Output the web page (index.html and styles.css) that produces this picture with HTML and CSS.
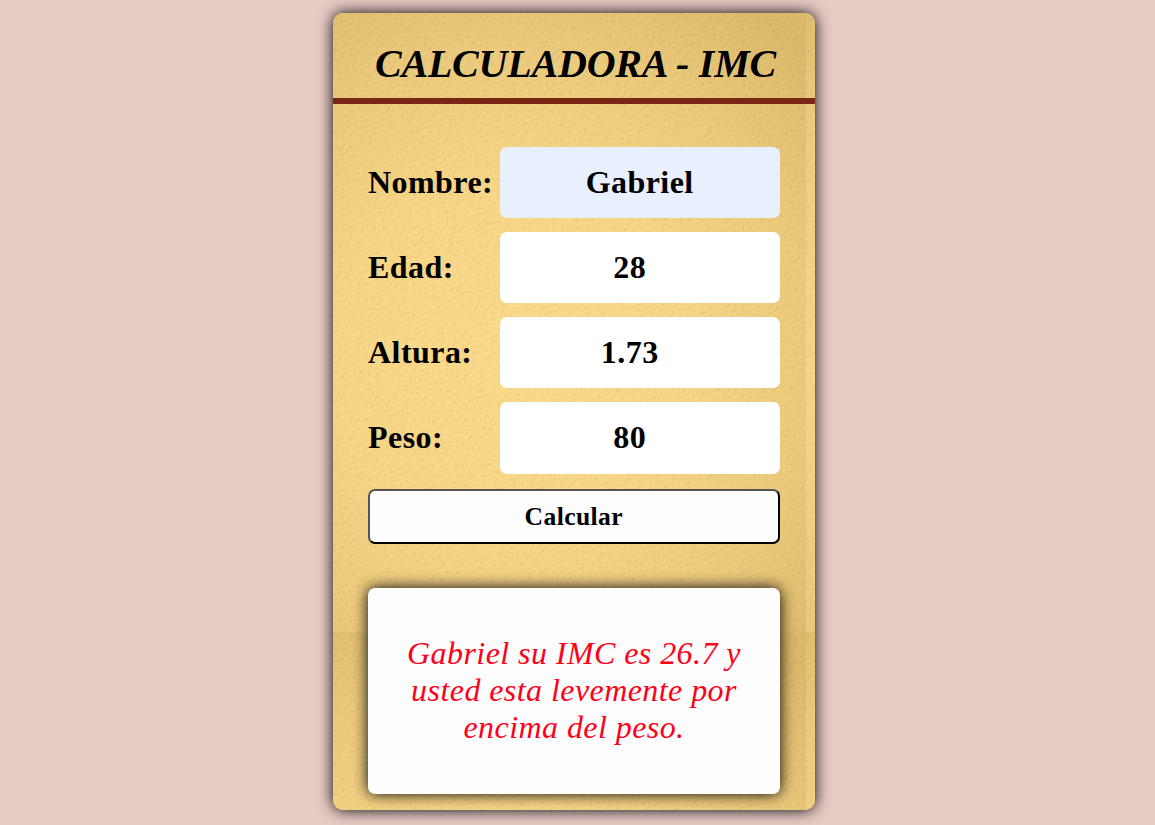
FILE: index.html
```html
<!DOCTYPE html>
<html lang="es">
<head>
<meta charset="utf-8">
<title>Calculadora - IMC</title>
<link rel="stylesheet" href="styles.css">
</head>
<body>
<main class="card">
  <svg class="texture" width="482" height="797" aria-hidden="true">
    <defs>
      <filter id="grain" x="0" y="0" width="100%" height="100%" color-interpolation-filters="sRGB">
        <feTurbulence type="fractalNoise" baseFrequency="0.27" numOctaves="2" seed="8" result="noise"/>
        <feDiffuseLighting in="noise" surfaceScale="0.22" diffuseConstant="1.21" lighting-color="#fff" result="light">
          <feDistantLight azimuth="225" elevation="56"/>
        </feDiffuseLighting>
        <feBlend in="SourceGraphic" in2="light" mode="multiply"/>
      </filter>
      <radialGradient id="gold" gradientUnits="userSpaceOnUse" cx="0" cy="0" r="1" gradientTransform="translate(180 345) scale(410 430)">
        <stop offset="0" stop-color="#fbda8b"/>
        <stop offset=".4" stop-color="#f8d688"/>
        <stop offset=".75" stop-color="#ebc97c"/>
        <stop offset="1" stop-color="#dcba6b"/>
      </radialGradient>
      <pattern id="tile" width="473" height="619" patternUnits="userSpaceOnUse">
        <rect width="473" height="619" fill="url(#gold)"/>
      </pattern>
    </defs>
    <rect width="482" height="797" fill="url(#tile)" filter="url(#grain)"/>
  </svg>
  <h1 class="title">CALCULADORA - IMC</h1>
  <form class="form">
    <label class="label" for="nombre">Nombre:</label>
    <input class="field autofilled" id="nombre" type="text" value="Gabriel">
    <label class="label" for="edad">Edad:</label>
    <input class="field numeric" id="edad" type="text" value="28">
    <label class="label" for="altura">Altura:</label>
    <input class="field numeric" id="altura" type="text" value="1.73">
    <label class="label" for="peso">Peso:</label>
    <input class="field numeric" id="peso" type="text" value="80">
    <button class="submit" type="button">Calcular</button>
  </form>
  <p class="result">Gabriel su IMC es 26.7 y usted esta levemente por encima del peso.</p>
</main>
</body>
</html>
```
FILE: styles.css
```css
* { box-sizing: border-box; }

body {
  margin: 0;
  padding: 13px 0 0 333px;
  height: 825px;
  overflow: hidden;
  background: #e6cac4;
  font-family: "Liberation Serif", "Times New Roman", serif;
  color: #000;
}

.card {
  position: relative;
  isolation: isolate;
  width: 482px;
  height: 797px;
  border-radius: 10px;
  background: #edcb7c;
  box-shadow: 0 0 15px #000;
}

.texture {
  position: absolute;
  inset: 0;
  z-index: -1;
  border-radius: 10px;
}

.title {
  margin: 0;
  height: 91px;
  padding: 28px 0 0 3px;
  border-bottom: 6px solid #7a2515;
  text-align: center;
  font-size: 40px;
  font-style: italic;
  line-height: 46px;
  letter-spacing: -0.2px;
}

.form {
  display: grid;
  grid-template-columns: 131.7px 280px;
  grid-template-rows: repeat(3, 71px) 72px 55px;
  row-gap: 14px;
  padding: 43px 35px 0;
}

.label {
  align-self: start;
  font-size: 32px;
  font-weight: bold;
  line-height: 71px;
  letter-spacing: 0.45px;
}

.field {
  width: 280px;
  height: 100%;
  padding: 0;
  border: 0;
  border-radius: 7px;
  background: #fff;
  color: #000;
  font: bold 32px "Liberation Serif", serif;
  letter-spacing: 0.45px;
  text-align: center;
}

.autofilled { background: #e8f0fe; }

.numeric { padding-right: 20px; }

#peso { padding-bottom: 1px; }

.submit {
  grid-column: 1 / -1;
  margin-top: 1px;
  margin-bottom: -1px;
  padding: 1px 0 0;
  border: 2px outset #000;
  border-radius: 7px;
  background: #fdfdfd;
  color: #000;
  font: bold 25.6px "Liberation Serif", serif;
  letter-spacing: 0.4px;
}

.result {
  display: flex;
  align-items: center;
  margin: 45px 35px 0;
  height: 206px;
  padding: 0 35px 2px;
  border-radius: 7px;
  background: #fdfdfd;
  box-shadow: 0 0 15px #000;
  color: #ff0019;
  font-size: 32px;
  font-style: italic;
  line-height: 37px;
  letter-spacing: 0.43px;
  text-align: center;
}
```
